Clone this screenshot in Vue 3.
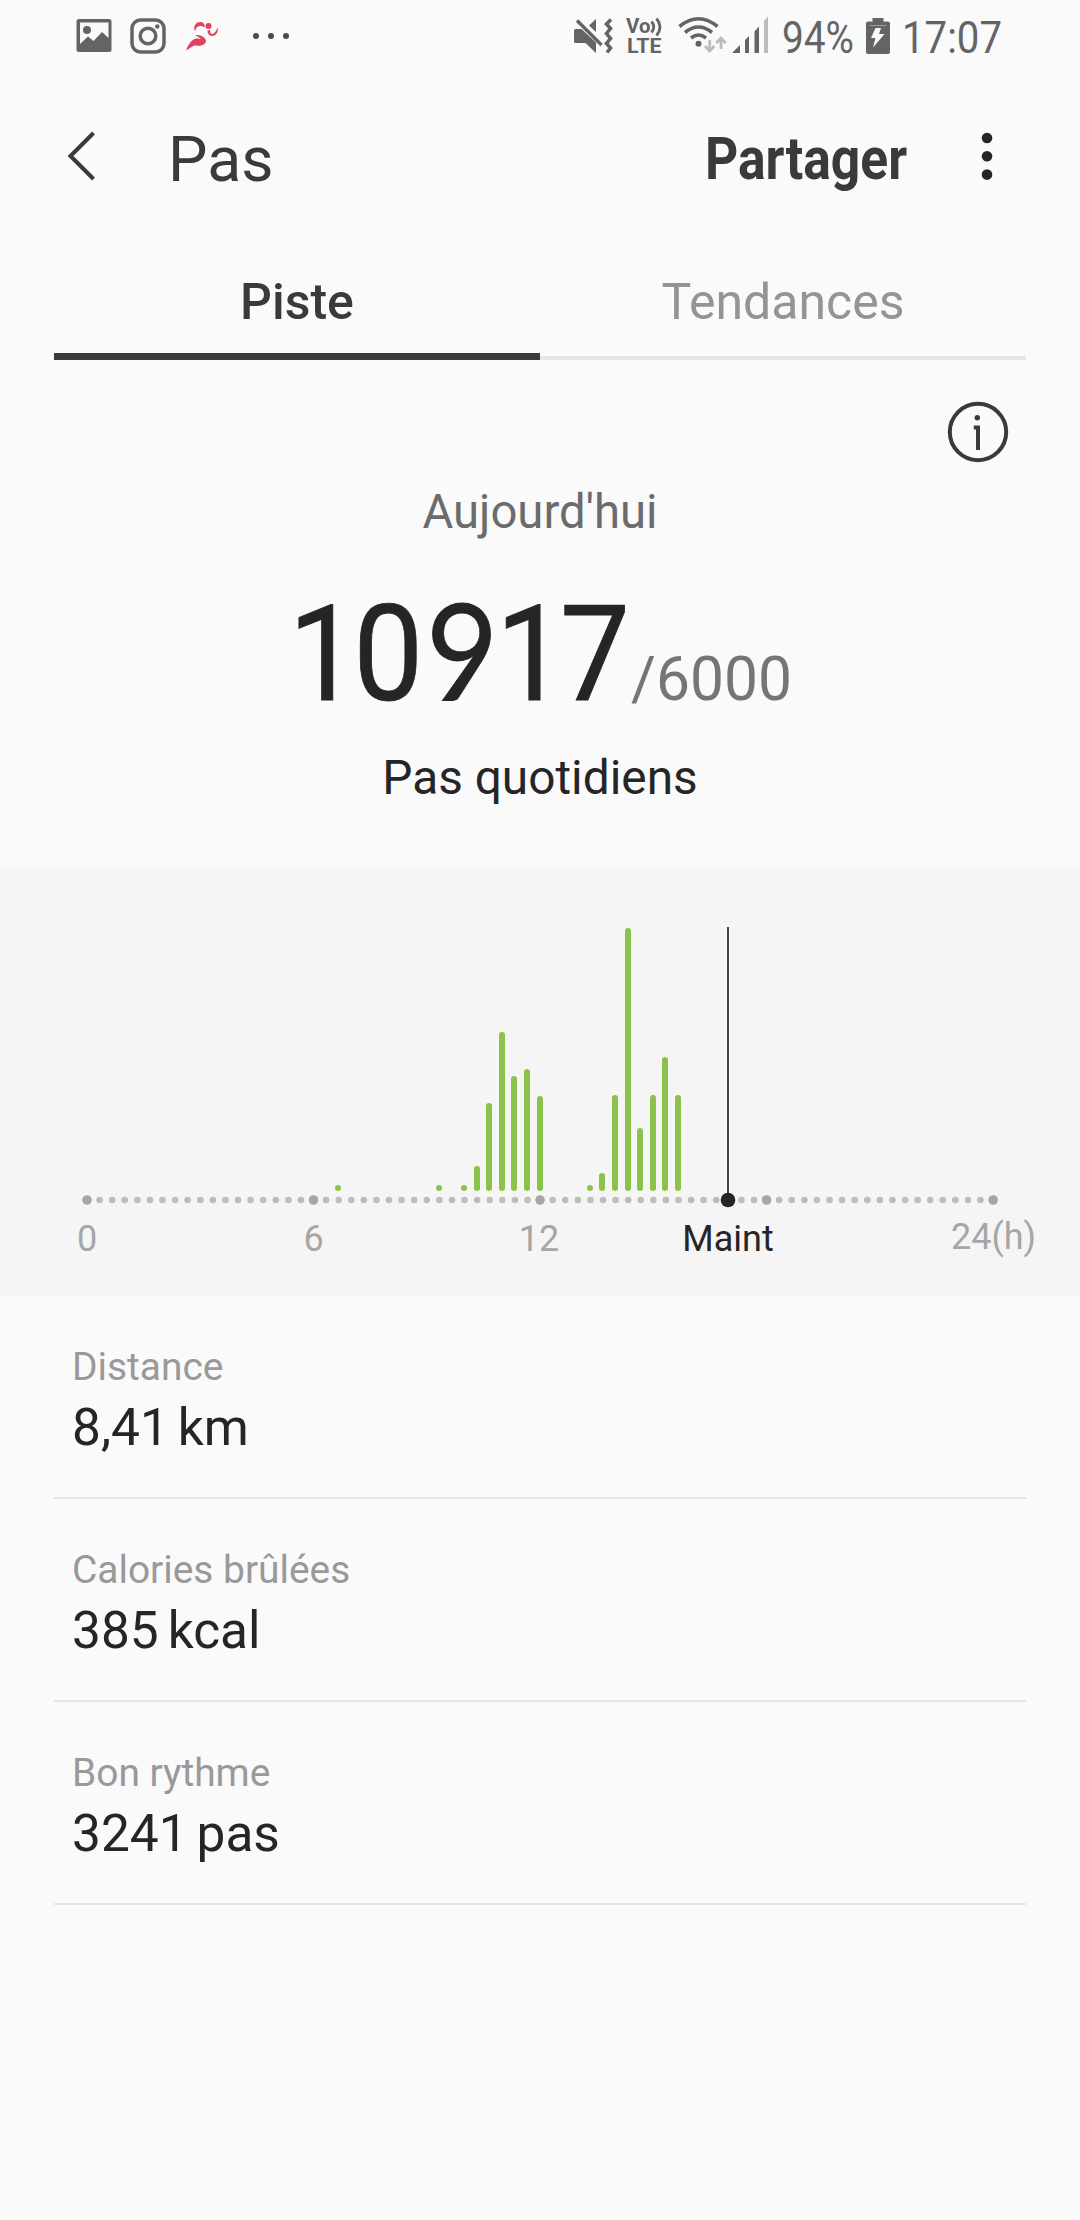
<template>
  <div class="screen">
    <div class="status-bar">
      <svg class="status-icons" width="260" height="72" viewBox="60 0 260 72">
        <path fill="#646464" fill-rule="evenodd" d="M79 19h30a2.500 2.500 0 0 1 2.500 2.500v28a2.500 2.500 0 0 1-2.500 2.500h-30a2.500 2.500 0 0 1-2.500-2.500v-28a2.500 2.500 0 0 1 2.500-2.500zM80 22.500V44l8-7.500 5.500 4.500 8.500-9 6.500 6V22.500z" />
        <circle cx="87" cy="30" r="4" fill="#646464" />
        <rect x="132" y="20" width="32" height="32" rx="8.500" fill="none" stroke="#646464" stroke-width="3.500" />
        <circle cx="148" cy="36" r="7.800" fill="none" stroke="#646464" stroke-width="3.500" />
        <circle cx="157.300" cy="26.500" r="2.200" fill="#646464" />
        <g fill="#e0415c">
          <circle cx="208.500" cy="26" r="3" />
          <path d="M195 31.500c-2-5 .5-9.500 5-9.500 3 0 5.500 2 4.500 5.500-2.500-2.500-8.500-2.500-9.500 4z" />
          <path d="M207.500 30.500l2.500-.5c0 2.500 1 4.500 2.500 4 2-.5 3.500-3 5.300-6.500.8 4-1.800 8.500-5.300 8.500-3.500 0-5-2.500-5-5.500z" />
          <path d="M195 35.500c3-2 11 1.500 11 5.300 0 3.200-4 5-7.500 5l-4.500-.3L186 50.500c1.500-4.500 5-10 8.500-11.500 2.500-.8 4.500-.3 6.500 0-1.500-1.500-3.500-2.800-6-3.500z" />
        </g>
        <circle v-for="x in [256, 271, 286]" :key="x" :cx="x" cy="36" r="3" fill="#4a4a4a" />
      </svg>
      <svg class="status-info" width="450" height="72" viewBox="560 0 450 72" fill="#646464">
        <path d="M575.500 29h6l14.500 13.500v10.500L585.500 43h-10a1.500 1.500 0 0 1-1.500-1.500v-11a1.500 1.500 0 0 1 1.500-1.500zM589 25.500l7-6.500v13z" />
        <path d="M577 20.500L601.500 45" fill="none" stroke="#646464" stroke-width="3.300" />
        <path d="M611 19.500l-4.500 4.500 4 4.500-4 5 4 5-4 5 4 4.500-3.500 4.500" fill="none" stroke="#646464" stroke-width="3.600" />
        <text x="626" y="33" class="volte" textLength="24.500" lengthAdjust="spacingAndGlyphs">Vo</text>
        <path d="M651.500 21.500q4.500 5.500 0 11M656.500 18.500q7 8.500 0 17" fill="none" stroke="#646464" stroke-width="2.800" />
        <text x="627" y="53.300" class="volte" textLength="34.500" lengthAdjust="spacingAndGlyphs">LTE</text>
        <g fill="none" stroke="#646464" stroke-width="3.600">
          <path d="M679.500 26.500Q698.500 11 717.500 26.500" />
          <path d="M685 32.500Q698.500 21.500 712 32.500" />
          <path d="M691 38Q698.500 32 706 38" />
        </g>
        <circle cx="698.500" cy="43.700" r="3" />
        <path d="M709.700 40v10.500M705 46l4.700 5 4.700-5M721 49V38.500M716.300 43l4.700-5 4.700 5" fill="none" stroke="#bcbcbc" stroke-width="2.800" />
        <path d="M732 53h8v-8zM745 53h4V36l-4 4zM754.500 53h4.500V26.500l-4.500 5z" />
        <path d="M764 53h4V16.500l-4 4.500z" fill="#bcbcbc" />
        <text x="782" y="53" class="status-text" textLength="72" lengthAdjust="spacingAndGlyphs">94%</text>
        <path d="M872.500 18h11v3.500h4.500a2 2 0 0 1 2 2v28.500a2 2 0 0 1-2 2H868a2 2 0 0 1-2-2V23.500a2 2 0 0 1 2-2h4.500z" />
        <path d="M870 25.500h16" stroke="#b0b0b0" stroke-width=".8" />
        <path d="M875.500 28h5.500l-2 6h5.500l-11.500 13.500 2.500-9.500h-4.500z" fill="#fafafa" />
        <text x="902" y="53" class="status-text" textLength="100" lengthAdjust="spacingAndGlyphs">17:07</text>
      </svg>
    </div>

    <header class="app-bar">
      <svg width="40" height="60" viewBox="60 126 40 60">
        <path d="M93.500 133L70.500 156l23 23" fill="none" stroke="#3a3a3a" stroke-width="4" />
      </svg>
      <h1>Pas</h1>
      <span class="share">Partager</span>
      <svg width="20" height="60" viewBox="977 126 20 60" fill="#252525">
        <circle v-for="y in [138, 156.300, 174.600]" :key="y" cx="987" :cy="y" r="5.300" />
      </svg>
    </header>

    <nav class="tabs">
      <div
        v-for="tab in tabs"
        :key="tab"
        :class="['tab', { active: tab === activeTab }]"
        @click="activeTab = tab"
      >{{ tab }}</div>
    </nav>

    <section class="summary">
      <div class="info-row">
        <svg width="62" height="62" viewBox="0 0 62 62">
          <circle cx="31" cy="31" r="28.200" fill="none" stroke="#3a3a3a" stroke-width="4" />
          <circle cx="30.300" cy="16.700" r="2.700" fill="#3a3a3a" />
          <path d="M26.800 24.500h6.200V49h-4V28.500h-2.200z" fill="#3a3a3a" />
        </svg>
      </div>
      <div class="day">Aujourd'hui</div>
      <svg class="count" width="1080" height="146" viewBox="0 584 1080 146">
        <text y="700" class="steps" transform="scale(.93 1)">
          <tspan v-for="(d, i) in String(steps)" :key="i" :x="digitX[i] / 0.93" :class="{ nine: d === '9' }">{{ d }}</tspan>
        </text>
        <text x="631" y="700" class="goal">/{{ goal }}</text>
      </svg>
      <div class="caption">Pas quotidiens</div>
    </section>

    <svg class="chart" width="1080" height="429" viewBox="0 867 1080 429">
      <circle
        v-for="i in 73"
        :key="i"
        :cx="slotX(i - 1)"
        cy="1200"
        :r="(i - 1) % 18 ? 3.300 : 4.800"
        :fill="(i - 1) % 18 ? '#bdbdbd' : '#a6a6a6'"
      />
      <rect
        v-for="bar in bars"
        :key="bar.slot"
        :x="Math.floor(slotX(bar.slot)) - 3"
        :y="1191 - bar.h"
        width="6"
        :height="bar.h"
        rx="3"
        fill="#8bc34a"
      />
      <path d="M728 927V1200" stroke="#444" stroke-width="2" />
      <circle cx="728" cy="1200" r="7.300" fill="#252525" />
      <text
        v-for="l in labels"
        :key="l.text"
        :x="l.x"
        :y="l.y"
        :class="['axis-label', { now: l.now }]"
      >{{ l.text }}</text>
    </svg>

    <ul class="stats">
      <li v-for="s in stats" :key="s.label">
        <div class="stat-label">{{ s.label }}</div>
        <div class="stat-value">{{ s.value }}<span class="unit">{{ s.unit }}</span></div>
      </li>
    </ul>
  </div>
</template>

<script setup>
import { ref } from 'vue'

const tabs = ['Piste', 'Tendances']
const activeTab = ref('Piste')
const steps = ref(10917)
const goal = ref(6000)

// hand-kerned origins of the big digits
const digitX = [288.5, 353.2, 426, 495.7, 560]

// one slot = 20 minutes
const slotX = (slot) => 87 + slot * 12.585

const bars = [
  { slot: 20, h: 6 },
  { slot: 28, h: 6 },
  { slot: 30, h: 6 },
  { slot: 31, h: 25 },
  { slot: 32, h: 88 },
  { slot: 33, h: 159 },
  { slot: 34, h: 115 },
  { slot: 35, h: 122 },
  { slot: 36, h: 95 },
  { slot: 40, h: 6 },
  { slot: 41, h: 18 },
  { slot: 42, h: 96 },
  { slot: 43, h: 263 },
  { slot: 44, h: 63 },
  { slot: 45, h: 96 },
  { slot: 46, h: 134 },
  { slot: 47, h: 96 }
]

const labels = [
  { text: '0', x: 87, y: 1251 },
  { text: '6', x: 313.5, y: 1251 },
  { text: '12', x: 539, y: 1251 },
  { text: 'Maint', x: 728, y: 1251, now: true },
  { text: '24(h)', x: 993.5, y: 1248.5 }
]

const stats = [
  { label: 'Distance', value: '8,41', unit: 'km' },
  { label: 'Calories brûlées', value: '385', unit: 'kcal' },
  { label: 'Bon rythme', value: '3241', unit: 'pas' }
]
</script>

<style>
body { margin: 0; background: #fafafa; }
</style>

<style scoped>
.screen { width: 1080px; height: 2220px; background: #fafafa; color: #252525; font-family: Roboto, "Liberation Sans", sans-serif; overflow: hidden; }
svg { display: block; flex-shrink: 0; overflow: visible; }
.status-bar { display: flex; justify-content: space-between; height: 72px; padding: 0 70px 0 60px; }
.status-text { font-size: 45px; }
.volte { font-size: 20px; font-weight: 700; }
.app-bar { display: flex; align-items: center; height: 168px; box-sizing: border-box; padding: 0 83px 0 60px; color: #3a3a3a; }
.app-bar h1 { margin: 0 0 0 68px; padding-top: 7px; font-size: 62.6px; font-weight: 400; line-height: 80px; }
.share { margin-left: auto; margin-right: 70px; padding-top: 5px; font-size: 59px; font-weight: 700; line-height: 80px; transform: scaleX(0.875); transform-origin: right; }
.tabs { display: flex; margin: 0 54px; }
.tab { flex: 1; height: 120px; box-sizing: border-box; padding-top: 6px; border-bottom: 4px solid #e6e6e6; text-align: center; font-size: 50px; line-height: 112px; color: #949494; cursor: pointer; }
.tab.active { border-bottom: 7px solid #3a3a3a; color: #3a3a3a; font-weight: 500; }
.summary { height: 507px; text-align: center; }
.info-row { display: flex; justify-content: flex-end; padding: 41px 71px 0 0; height: 81px; }
.day { font-size: 47.3px; line-height: 60px; color: #6b6b6b; }
.count { margin-top: 42px; }
.steps { font-size: 134px; fill: #252525; stroke: #252525; stroke-width: 0.8px; }
.nine { font-family: Lato, Roboto, sans-serif; }
.goal { font-size: 60.5px; fill: #757575; }
.caption { margin-top: 18px; font-size: 47.8px; line-height: 60px; }
.chart { background: #f5f5f5; }
.axis-label { font-size: 36px; fill: #a6a6a6; text-anchor: middle; }
.axis-label.now { fill: #252525; }
.stats { list-style: none; margin: 0 54px; padding: 0; }
.stats li { height: 203px; box-sizing: border-box; padding: 46px 18px 0; border-bottom: 2px solid #e5e5e5; }
.stat-label { font-size: 38.9px; line-height: 50px; color: #999; }
.stat-value { padding-top: 1px; font-size: 51.4px; line-height: 70px; }
.unit { margin-left: 9px; }
</style>
